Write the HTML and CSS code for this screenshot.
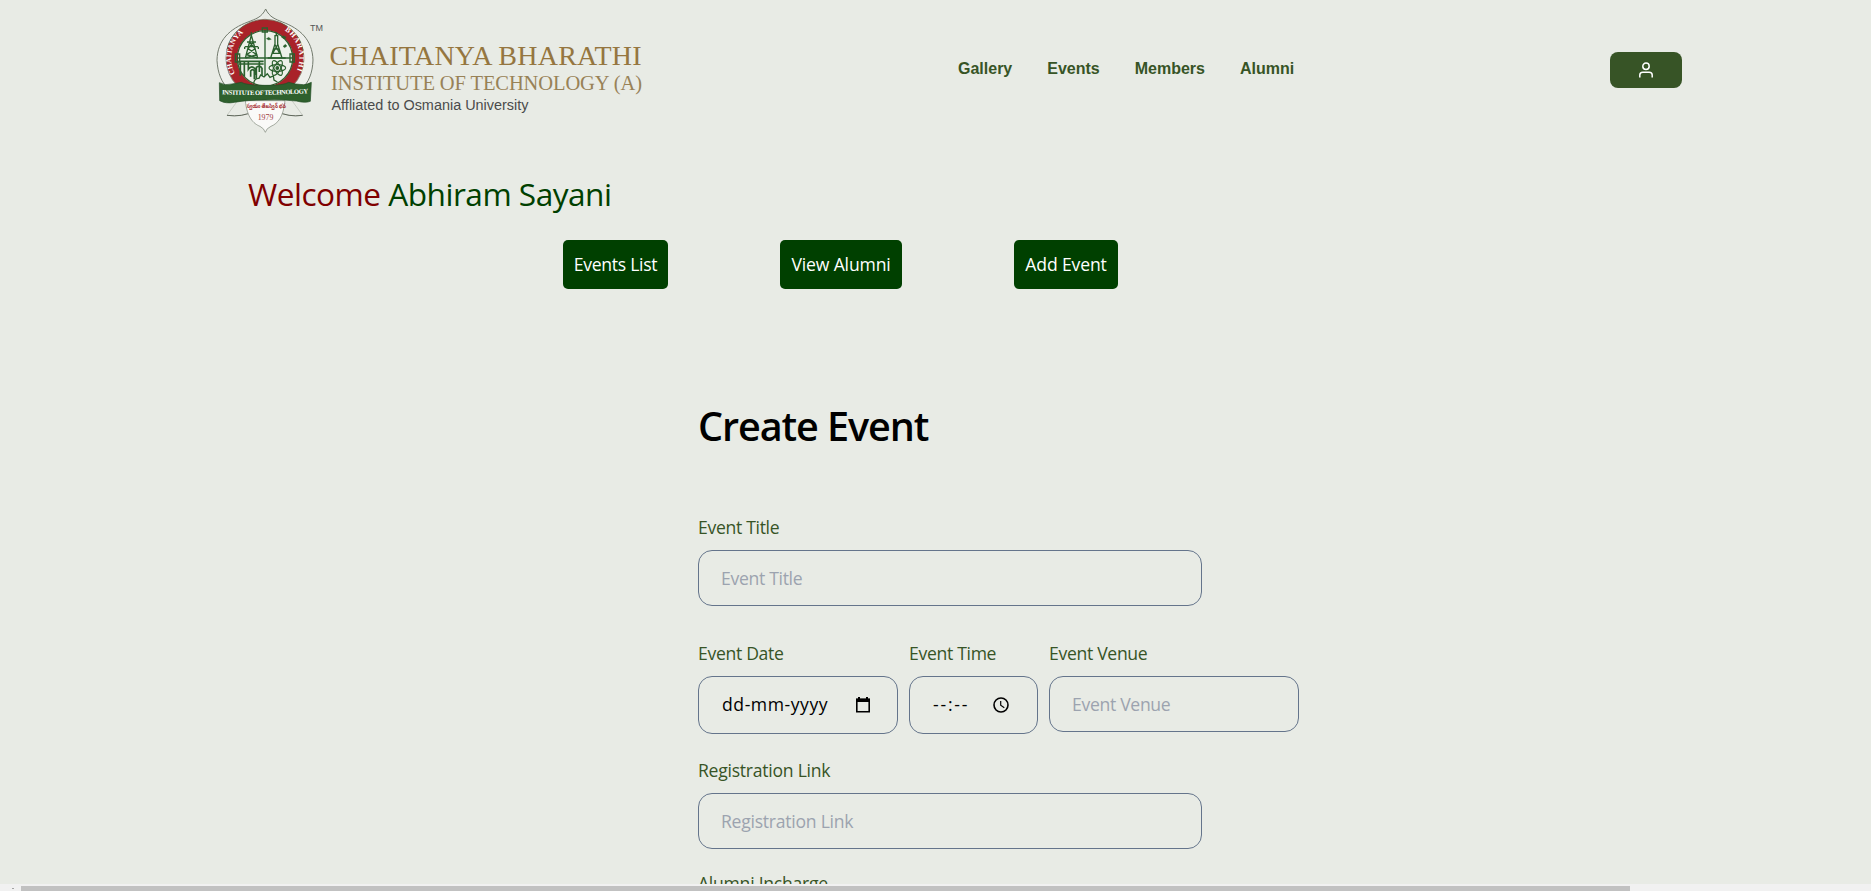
FILE: index.html
```html
<!DOCTYPE html>
<html lang="en">
<head>
<meta charset="utf-8">
<title>Create Event</title>
<link rel="stylesheet" href="styles.css">
</head>
<body>
<div class="page">
  <header class="header">
    <svg class="logo" viewBox="0 0 450 140" role="img" aria-label="Chaitanya Bharathi Institute of Technology">
      <defs>
        <path id="arc-left" d="M90 221A98 98 0 0 1 127 90"/>
        <path id="arc-right" d="M239 91A98 98 0 0 1 268 226"/>
        <path id="ribbon" d="M51 283Q180 288 314 279"/>
      </defs>
      <g transform="scale(.33333)">
        <path d="M182 27C170 53 151 57 129 66C75 86 37 120 36 181C38 218 49 249 74 270M182 27C194 53 212 57 232 66C286 86 322 120 324 180C323 218 311 249 288 268" fill="#eef0ec" stroke="#71796c" stroke-width="3"/>
        <path d="M66 150C75 98 122 62 181 62C240 62 284 98 294 150" fill="none" stroke="#6b8a60" stroke-width="3"/>
        <circle cx="180" cy="175" r="100" fill="#f0f2ed" stroke="#a92229" stroke-width="32"/>
        <circle cx="180" cy="175" r="117" fill="none" stroke="#56452f" stroke-width="2"/>
        <circle cx="180" cy="175" r="83" fill="#edf0e9" stroke="#315b2d" stroke-width="4"/>
        <g fill="none" stroke="#2b602e" stroke-width="4">
          <path d="M180 92V235M97 174H263M91 162V186H104V162ZM255 162V186H268V162ZM172 84V96H187V84Z"/>
          <path d="M121 174L139 106L158 174M139 106V96M126 126H153M120 140H159M119 140V147M160 140V147M133 126L150 146L125 164L158 174M146 126L129 146L155 164L121 174"/>
          <path d="M197 174L210 132V107H218V132L231 174M201 160H227M205 147H224M209 132L224 160M219 132L203 160M188 174H242M214 107V96"/>
          <path d="M184 116L191 112L199 118L191 120ZM229 111L236 107L244 112L237 117ZM234 139L241 133L246 138L239 143Z" fill="#2b602e" stroke-width="1"/>
          <path d="M100 184H176M100 192H176M106 185V227M118 185V229M130 185V208Q141 193 151 208V225M163 185V216M137 230V213Q143 205 148 213V238M154 236V202Q164 193 171 205V229" stroke-width="5"/>
          <g transform="translate(217 204)" stroke-width="3.5"><ellipse rx="25" ry="10"/><ellipse rx="25" ry="10" transform="rotate(60)"/><ellipse rx="25" ry="10" transform="rotate(120)"/><circle r="4" fill="#2b602e"/></g>
          <path d="M146 249Q149 234 162 235L167 225L177 231L187 221L195 232L205 228L207 240L217 246" fill="#edf0e9"/>
        </g>
        <g class="emblem-text">
          <text font-size="22"><textPath href="#arc-left" textLength="136">CHAITANYA</textPath></text>
          <text font-size="22"><textPath href="#arc-right" textLength="136">BHARATHI</textPath></text>
        </g>
        <path d="M98 302L66 346Q112 352 145 334M261 302L293 346Q250 352 216 334" fill="none" stroke="#b9beb5" stroke-width="2"/>
        <path d="M66 346Q112 352 145 334M293 346Q250 352 216 334" fill="none" stroke="#5f675b" stroke-width="3"/>
        <path d="M121 302C126 352 145 371 165 379Q177 385 181 397Q184 385 198 379C219 370 235 351 240 302Z" fill="#fafaf8" stroke="#7c8577" stroke-width="2"/>
        <path d="M43 248Q60 258 81 252L109 247Q124 256 180 256Q235 257 251 247Q272 254 296 254Q308 253 319 247L316 304Q301 310 274 303Q232 298 180 300Q125 300 89 307Q62 312 44 302Z" fill="#2e602d" stroke="#234d25" stroke-width="2"/>
        <text class="emblem-text" font-size="20"><textPath href="#ribbon" textLength="259">INSTITUTE OF TECHNOLOGY</textPath></text>
        <text class="motto" x="125" y="325" textLength="118" lengthAdjust="spacingAndGlyphs">స్వయం తేజస్విన్ భవ</text>
        <text class="year" x="158" y="359" textLength="47" lengthAdjust="spacingAndGlyphs">1979</text>
      </g>
      <text class="trademark" x="105" y="30.5" textLength="13" lengthAdjust="spacingAndGlyphs">TM</text>
      <text class="name" x="124.5" y="65" textLength="312">CHAITANYA BHARATHI</text>
      <text class="institute" x="126" y="90" textLength="311">INSTITUTE OF TECHNOLOGY (A)</text>
      <text class="affiliation" x="126.5" y="110" textLength="197" lengthAdjust="spacingAndGlyphs">Affliated to Osmania University</text>
    </svg>
    <nav class="nav"><a>Gallery</a><a>Events</a><a>Members</a><a>Alumni</a></nav>
    <button class="account" aria-label="Account">
      <svg width="16" height="16" viewBox="0 0 16 16" fill="none" stroke="#fff" stroke-width="1.5"><circle cx="8" cy="4.2" r="3.2"/><path d="M1.8 15.5V13Q1.8 10.2 4.8 10.2H11.2Q14.2 10.2 14.2 13V15.5"/></svg>
    </button>
  </header>
  <main>
    <h1 class="welcome"><span class="greeting">Welcome</span> <span class="user">Abhiram Sayani</span></h1>
    <div class="actions">
      <button class="action events">Events List</button>
      <button class="action view">View Alumni</button>
      <button class="action add">Add Event</button>
    </div>
    <form class="form">
      <h2 class="title">Create Event</h2>
      <div class="field wide"><label>Event Title</label><input placeholder="Event Title"></div>
      <div class="row">
        <div class="field date"><label>Event Date</label><div class="picker"><span>dd-mm-yyyy</span>
          <svg width="16" height="18" viewBox="0 0 16 18"><path d="M1.8 3.5H14.2V15.7H1.8Z" fill="none" stroke="#000" stroke-width="1.6"/><path d="M1 2.5H15V6H1ZM3 1H5V3H3ZM11 1H13V3H11Z"/></svg></div></div>
        <div class="field time"><label>Event Time</label><div class="picker"><span>--:--</span>
          <svg width="16" height="18" viewBox="0 0 16 18" fill="none" stroke="#000"><circle cx="8" cy="9" r="7" stroke-width="1.6"/><path d="M7.7 5V9.3L11.3 11.7" stroke-width="1.2"/></svg></div></div>
        <div class="field venue"><label>Event Venue</label><input placeholder="Event Venue"></div>
      </div>
      <div class="field wide link"><label>Registration Link</label><input placeholder="Registration Link"></div>
      <div class="field wide"><label>Alumni Incharge</label><input></div>
    </form>
  </main>
</div>
<div class="scrollbar"><span class="arrow"></span><span class="thumb"></span></div>
</body>
</html>
```
FILE: styles.css
```css
* { box-sizing: border-box; }
body {
  margin: 0;
  height: 891px;
  overflow: hidden;
  display: flex;
  flex-direction: column;
  background: #e8ebe5;
  font-family: "Open Sans", "Noto Sans", sans-serif;
}
.page { height: 884px; overflow: hidden; }
.header { display: flex; height: 140px; padding-left: 205px; }
.logo { width: 450px; height: 140px; flex: none; }
.emblem-text { fill: #fff; font-family: "Liberation Serif", serif; font-weight: 700; }
.motto { fill: #a52b30; font: 700 18px "Noto Sans Telugu", "Noto Sans", sans-serif; }
.year { fill: #a04045; font: 22px "Liberation Serif", serif; }
.trademark { fill: #555; font: 9px "Liberation Sans", sans-serif; }
.name { fill: #957640; font: 28px "Liberation Serif", serif; }
.institute { fill: #988257; font: 20.5px "Liberation Serif", serif; }
.affiliation { fill: #4b4b4b; font: 15.5px "Liberation Sans", sans-serif; }
.nav {
  display: flex;
  gap: 35px;
  width: 652px;
  margin-left: 303px;
  padding-top: 59px;
  font: 700 16px/20px "Liberation Sans", sans-serif;
  color: #375426;
}
.account {
  display: grid;
  place-items: center;
  width: 72px;
  height: 36px;
  margin-top: 52px;
  padding: 0;
  border: 0;
  border-radius: 8px;
  background: #375426;
}
.welcome {
  margin: 30px 0 22px 248px;
  font-size: 31.6px;
  letter-spacing: -0.5px;
  line-height: 48px;
  font-weight: 400;
  white-space: nowrap;
}
.greeting { color: #800000; }
.user { color: #004000; }
.actions { display: flex; gap: 112px; padding-left: 563px; }
.action {
  height: 49px;
  padding: 0 0 2px;
  border: 0;
  border-radius: 5px;
  background: #004000;
  color: #fff;
  font: 17.6px/24px "Open Sans", sans-serif;
  letter-spacing: -0.3px;
  white-space: nowrap;
}
.view, .add { letter-spacing: -0.15px; }
.events { width: 105px; }
.view { width: 122px; }
.add { width: 104px; }
.form { padding: 107px 0 0 698px; }
.title { margin: 0 0 59px; font-size: 39.6px; line-height: 60px; font-weight: 600; letter-spacing: -1.1px; }
.field { display: flex; flex-direction: column; }
.field label { height: 24px; margin-bottom: 11px; font-size: 17.6px; line-height: 24px; letter-spacing: -0.32px; color: #375426; white-space: nowrap; }
.field input, .picker {
  width: 100%;
  height: 56px;
  padding: 0 22px;
  border: 1px solid #64748b;
  border-radius: 14px;
  background: transparent;
  font: 17.6px/24px "Open Sans", sans-serif;
  letter-spacing: -0.32px;
}
.field input::placeholder { color: #9ca3af; opacity: 1; }
.picker { height: 58px; padding: 0 26px 2px 23px; display: flex; align-items: center; justify-content: space-between; white-space: nowrap; letter-spacing: 0.55px; }
.picker svg { position: relative; top: 1px; }
.wide { width: 504px; }
.row { display: flex; gap: 11px; margin: 35px 0 24px; }
.date { width: 200px; }
.time { width: 129px; }
.time .picker { padding-right: 28px; letter-spacing: 1.8px; }
.venue { width: 250px; }
.link { margin-bottom: 22px; }
.link label, .link input, .link + .field label { letter-spacing: -0.26px; }
.scrollbar { display: flex; height: 7px; padding-top: 2px; background: #f1f1f1; }
.arrow { width: 2px; height: 1px; margin: 2px 7px 0 12px; background: #a3a3a3; }
.thumb { width: 1609px; height: 5px; background: #c1c1c1; }
```
